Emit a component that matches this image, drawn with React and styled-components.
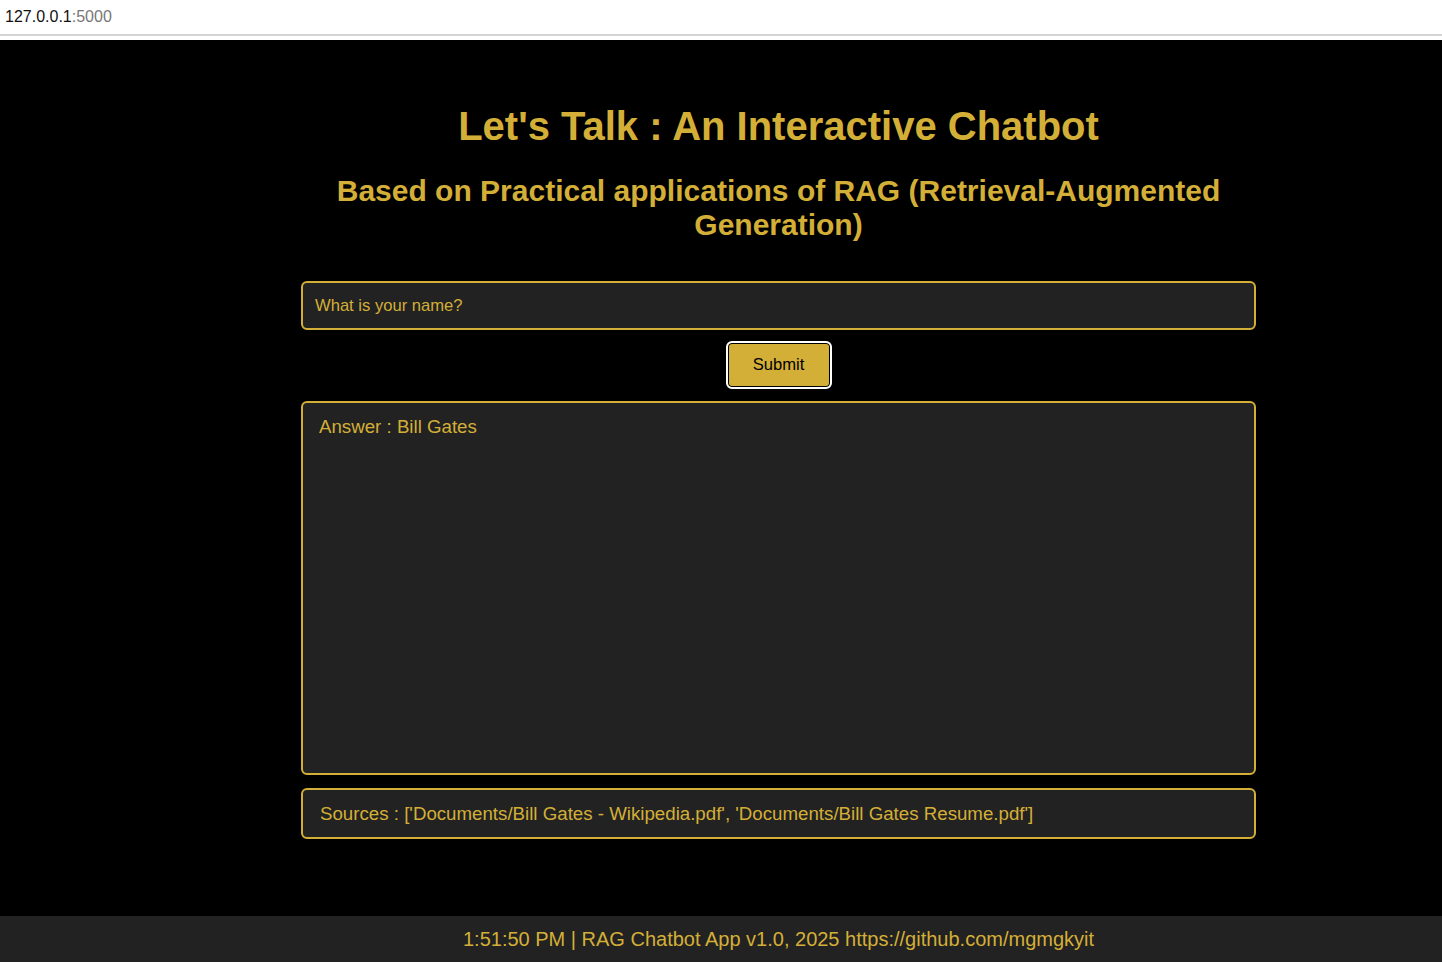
import React from "react";
import styled, { createGlobalStyle } from "styled-components";

const GOLD = "#d4af37";

const GlobalStyle = createGlobalStyle`
  html, body {
    margin: 0;
    padding: 0;
    background: #000;
    font-family: "Liberation Sans", Arial, sans-serif;
  }
`;

export default function App() {
  return (
    <>
      <GlobalStyle />
      <Page>
        <AddressBar>
          <Host>127.0.0.1</Host>
          <Port>:5000</Port>
        </AddressBar>
        <Main>
          <Column>
            <Title>Let's Talk : An Interactive Chatbot</Title>
            <Subtitle>
              Based on Practical applications of RAG (Retrieval-Augmented
              Generation)
            </Subtitle>
            <Form>
              <Input placeholder="What is your name?" />
              <SubmitButton type="button">Submit</SubmitButton>
            </Form>
            <Panel $height={374} $gap={12}>
              <PanelText>Answer : Bill Gates</PanelText>
            </Panel>
            <Panel $height={51} $gap={13} $center>
              <PanelText>
                Sources : ['Documents/Bill Gates - Wikipedia.pdf',
                'Documents/Bill Gates Resume.pdf']
              </PanelText>
            </Panel>
          </Column>
        </Main>
        <Footer>
          <FooterText>
            1:51:50 PM | RAG Chatbot App v1.0, 2025 https://github.com/mgmgkyit
          </FooterText>
        </Footer>
      </Page>
    </>
  );
}

const Page = styled.div`
  display: flex;
  flex-direction: column;
  min-height: 100vh;
`;

const AddressBar = styled.div`
  height: 34px;
  background: #fff;
  border-bottom: 2px solid #d4d4d4;
  box-shadow: 0 4px 0 #fff;
  margin-bottom: 4px;
  display: flex;
  align-items: center;
  padding-left: 5px;
  font-size: 16px;
  font-family: "Liberation Sans", Arial, sans-serif;
`;

const Host = styled.span`
  color: #111;
`;

const Port = styled.span`
  color: #777;
`;

const Main = styled.main`
  flex: 1;
  background: #000;
  display: flex;
  padding: 63px 186px 0 301px;
`;

const Column = styled.div`
  width: 955px;
  display: flex;
  flex-direction: column;
`;

const Title = styled.h1`
  margin: 0;
  text-align: center;
  color: ${GOLD};
  font-size: 40px;
  line-height: 46px;
  font-weight: 700;
`;

const Subtitle = styled.h2`
  margin: 25px 0 0;
  text-align: center;
  color: ${GOLD};
  font-size: 30px;
  line-height: 34px;
  font-weight: 700;
`;

const Form = styled.div`
  margin-top: 39px;
  display: flex;
  flex-direction: column;
  align-items: center;
  gap: 11px;
`;

const Input = styled.input`
  box-sizing: border-box;
  width: 100%;
  height: 49px;
  background: #222;
  border: 2px solid ${GOLD};
  border-radius: 6px;
  padding: 0 12px;
  color: ${GOLD};
  font-family: "Liberation Sans", Arial, sans-serif;
  font-size: 16.6px;
  outline: none;

  &::placeholder {
    color: ${GOLD};
    opacity: 1;
  }
`;

const SubmitButton = styled.button`
  box-sizing: border-box;
  width: 106px;
  height: 48px;
  background: ${GOLD};
  border: 2px solid #fff;
  border-radius: 6px;
  box-shadow: inset 0 0 0 1px #000;
  color: #000;
  font-family: "Liberation Sans", Arial, sans-serif;
  font-size: 16.6px;
  cursor: pointer;
`;

const Panel = styled.div`
  box-sizing: border-box;
  margin-top: ${(p) => p.$gap}px;
  height: ${(p) => p.$height}px;
  background: #222;
  border: 2px solid ${GOLD};
  border-radius: 6px;
  padding: ${(p) => (p.$center ? "0 17px" : "13px 16px")};
  display: flex;
  align-items: ${(p) => (p.$center ? "center" : "flex-start")};
`;

const PanelText = styled.p`
  margin: 0;
  color: ${GOLD};
  font-size: 18.7px;
  line-height: 22px;
`;

const Footer = styled.footer`
  margin-top: 77px;
  height: 46px;
  background: #222;
  display: flex;
  align-items: center;
  justify-content: center;
  padding-left: 115px;
`;

const FooterText = styled.span`
  color: ${GOLD};
  font-size: 20px;
`;
